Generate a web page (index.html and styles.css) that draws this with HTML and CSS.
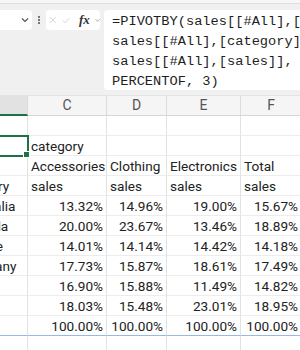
FILE: index.html
```html
<!DOCTYPE html>
<html>
<head>
<title>Sheet</title>
<link rel="stylesheet" href="styles.css">
</head>
<body>

<div class="top-strip"></div>

<div class="formula-bar">
    <div class="name-box">
        <svg class="chev" width="8" height="6" viewBox="0 0 8 6"><path d="M1 1.5 L4 4.5 L7 1.5" fill="none" stroke="#555" stroke-width="1.2"/></svg>
    </div>
    <div class="grip">
        <span></span><span></span><span></span>
    </div>
    <div class="fx-tools">
        <svg width="10" height="10" viewBox="0 0 10 10"><path d="M1 1 L9 9 M9 1 L1 9" stroke="#c8c8c8" stroke-width="1"/></svg>
        <svg width="11" height="9" viewBox="0 0 11 9"><path d="M1 4.5 L4 7.5 L10 1" fill="none" stroke="#c8c8c8" stroke-width="1"/></svg>
        <span class="fx">fx</span>
        <svg width="7" height="5" viewBox="0 0 7 5"><path d="M1 1 L3.5 3.5 L6 1" fill="none" stroke="#888" stroke-width="1"/></svg>
    </div>
    <div class="formula">=PIVOTBY(sales[[#All],[country]],
sales[[#All],[category]],
sales[[#All],[sales]],
PERCENTOF, 3)</div>
</div>

<div class="sheet">
    <div class="grid">
        <div class="colhead picked">B</div>
        <div class="colhead">C</div>
        <div class="colhead">D</div>
        <div class="colhead">E</div>
        <div class="colhead">F</div>

        <div class="cell"></div><div class="cell"></div><div class="cell"></div><div class="cell"></div><div class="cell"></div>

        <div class="cell active"><span class="handle"></span></div><div class="cell">category</div><div class="cell"></div><div class="cell"></div><div class="cell"></div>

        <div class="cell"></div><div class="cell">Accessories</div><div class="cell">Clothing</div><div class="cell">Electronics</div><div class="cell">Total</div>

        <div class="cell">Country</div><div class="cell">sales</div><div class="cell">sales</div><div class="cell">sales</div><div class="cell">sales</div>

        <div class="cell">Australia</div><div class="cell num">13.32%</div><div class="cell num">14.96%</div><div class="cell num">19.00%</div><div class="cell num">15.67%</div>
        <div class="cell">Canada</div><div class="cell num">20.00%</div><div class="cell num">23.67%</div><div class="cell num">13.46%</div><div class="cell num">18.89%</div>
        <div class="cell">France</div><div class="cell num">14.01%</div><div class="cell num">14.14%</div><div class="cell num">14.42%</div><div class="cell num">14.18%</div>
        <div class="cell">Germany</div><div class="cell num">17.73%</div><div class="cell num">15.87%</div><div class="cell num">18.61%</div><div class="cell num">17.49%</div>
        <div class="cell">UK</div><div class="cell num">16.90%</div><div class="cell num">15.88%</div><div class="cell num">11.49%</div><div class="cell num">14.82%</div>
        <div class="cell">USA</div><div class="cell num">18.03%</div><div class="cell num">15.48%</div><div class="cell num">23.01%</div><div class="cell num">18.95%</div>
        <div class="cell last">Total</div><div class="cell num last">100.00%</div><div class="cell num last">100.00%</div><div class="cell num last">100.00%</div><div class="cell num last">100.00%</div>

        <div class="cell"></div><div class="cell"></div><div class="cell"></div><div class="cell"></div><div class="cell"></div>
    </div>
</div>

</body>
</html>
```

FILE: styles.css
```css
body {
    margin: 0;
    width: 300px;
    height: 350px;
    overflow: hidden;
    background-color: #ffffff;
    font-family: Roboto, "Liberation Sans", sans-serif;
    color: #222222;
}
.top-strip {
    height: 3px;
    background-color: #f7f7f7;
    border-bottom: 1px solid #dedede;
}
.formula-bar {
    display: flex;
    align-items: flex-start;
    background-color: #f0f0f0;
    padding: 6px 0 5px 0;
    height: 80px;
}
.name-box {
    width: 32px;
    height: 20px;
    background-color: #ffffff;
    border-radius: 0 4px 4px 0;
    display: flex;
    align-items: center;
    justify-content: flex-end;
}
.chev {
    margin-right: 3px;
}
.grip {
    width: 14px;
    height: 20px;
    display: flex;
    flex-direction: column;
    align-items: center;
    justify-content: center;
    gap: 1.5px;
}
.grip span {
    width: 2px;
    height: 1.5px;
    background-color: #777777;
}
.fx-tools {
    width: 54px;
    height: 20px;
    background-color: #ffffff;
    border-radius: 4px;
    display: flex;
    align-items: center;
    gap: 5px;
    padding-left: 3px;
    box-sizing: border-box;
}
.fx {
    font-family: "Liberation Serif", serif;
    font-style: italic;
    font-weight: bold;
    font-size: 13px;
    color: #333333;
    margin-left: 4px;
}
.formula {
    margin-left: 4px;
    flex: 1;
    height: 80px;
    background-color: #ffffff;
    border-radius: 4px 0 0 4px;
    box-sizing: border-box;
    padding: 2px 0 0 8px;
    font-family: "Liberation Mono", "DejaVu Sans Mono", monospace;
    font-size: 13.7px;
    line-height: 20px;
    white-space: pre;
    overflow: hidden;
    color: #1e1e1e;
}
.sheet {
    overflow: hidden;
    border-top: 1px solid #e4e4e4;
}
.grid {
    display: grid;
    grid-template-columns: 69px 79px 60px 74px 61px;
    grid-auto-rows: 20px;
    margin-left: -41px;
}
.colhead {
    background-color: #f5f5f5;
    border-right: 1px solid #dcdcdc;
    border-bottom: 1px solid #d6d6d6;
    text-align: center;
    font-size: 14px;
    line-height: 19px;
    color: #555555;
    box-sizing: border-box;
}
.colhead.picked {
    background-color: #e2e2e2;
    border-bottom: 2px solid #1e7145;
}
.cell {
    position: relative;
    border-right: 1px solid #e2e2e2;
    border-bottom: 1px solid #ececec;
    box-sizing: border-box;
    font-size: 13.6px;
    line-height: 20px;
    padding: 0 3px;
    white-space: nowrap;
    overflow: hidden;
}
.num {
    text-align: right;
}
.last {
    border-bottom: 1px solid #9ab8e6;
}
.active {
    overflow: visible;
    outline: 2px solid #1e7145;
    outline-offset: -1px;
    z-index: 1;
}
.handle {
    position: absolute;
    right: -3px;
    bottom: -3px;
    width: 5px;
    height: 5px;
    background-color: #1e7145;
    border: 1px solid #ffffff;
}
```
